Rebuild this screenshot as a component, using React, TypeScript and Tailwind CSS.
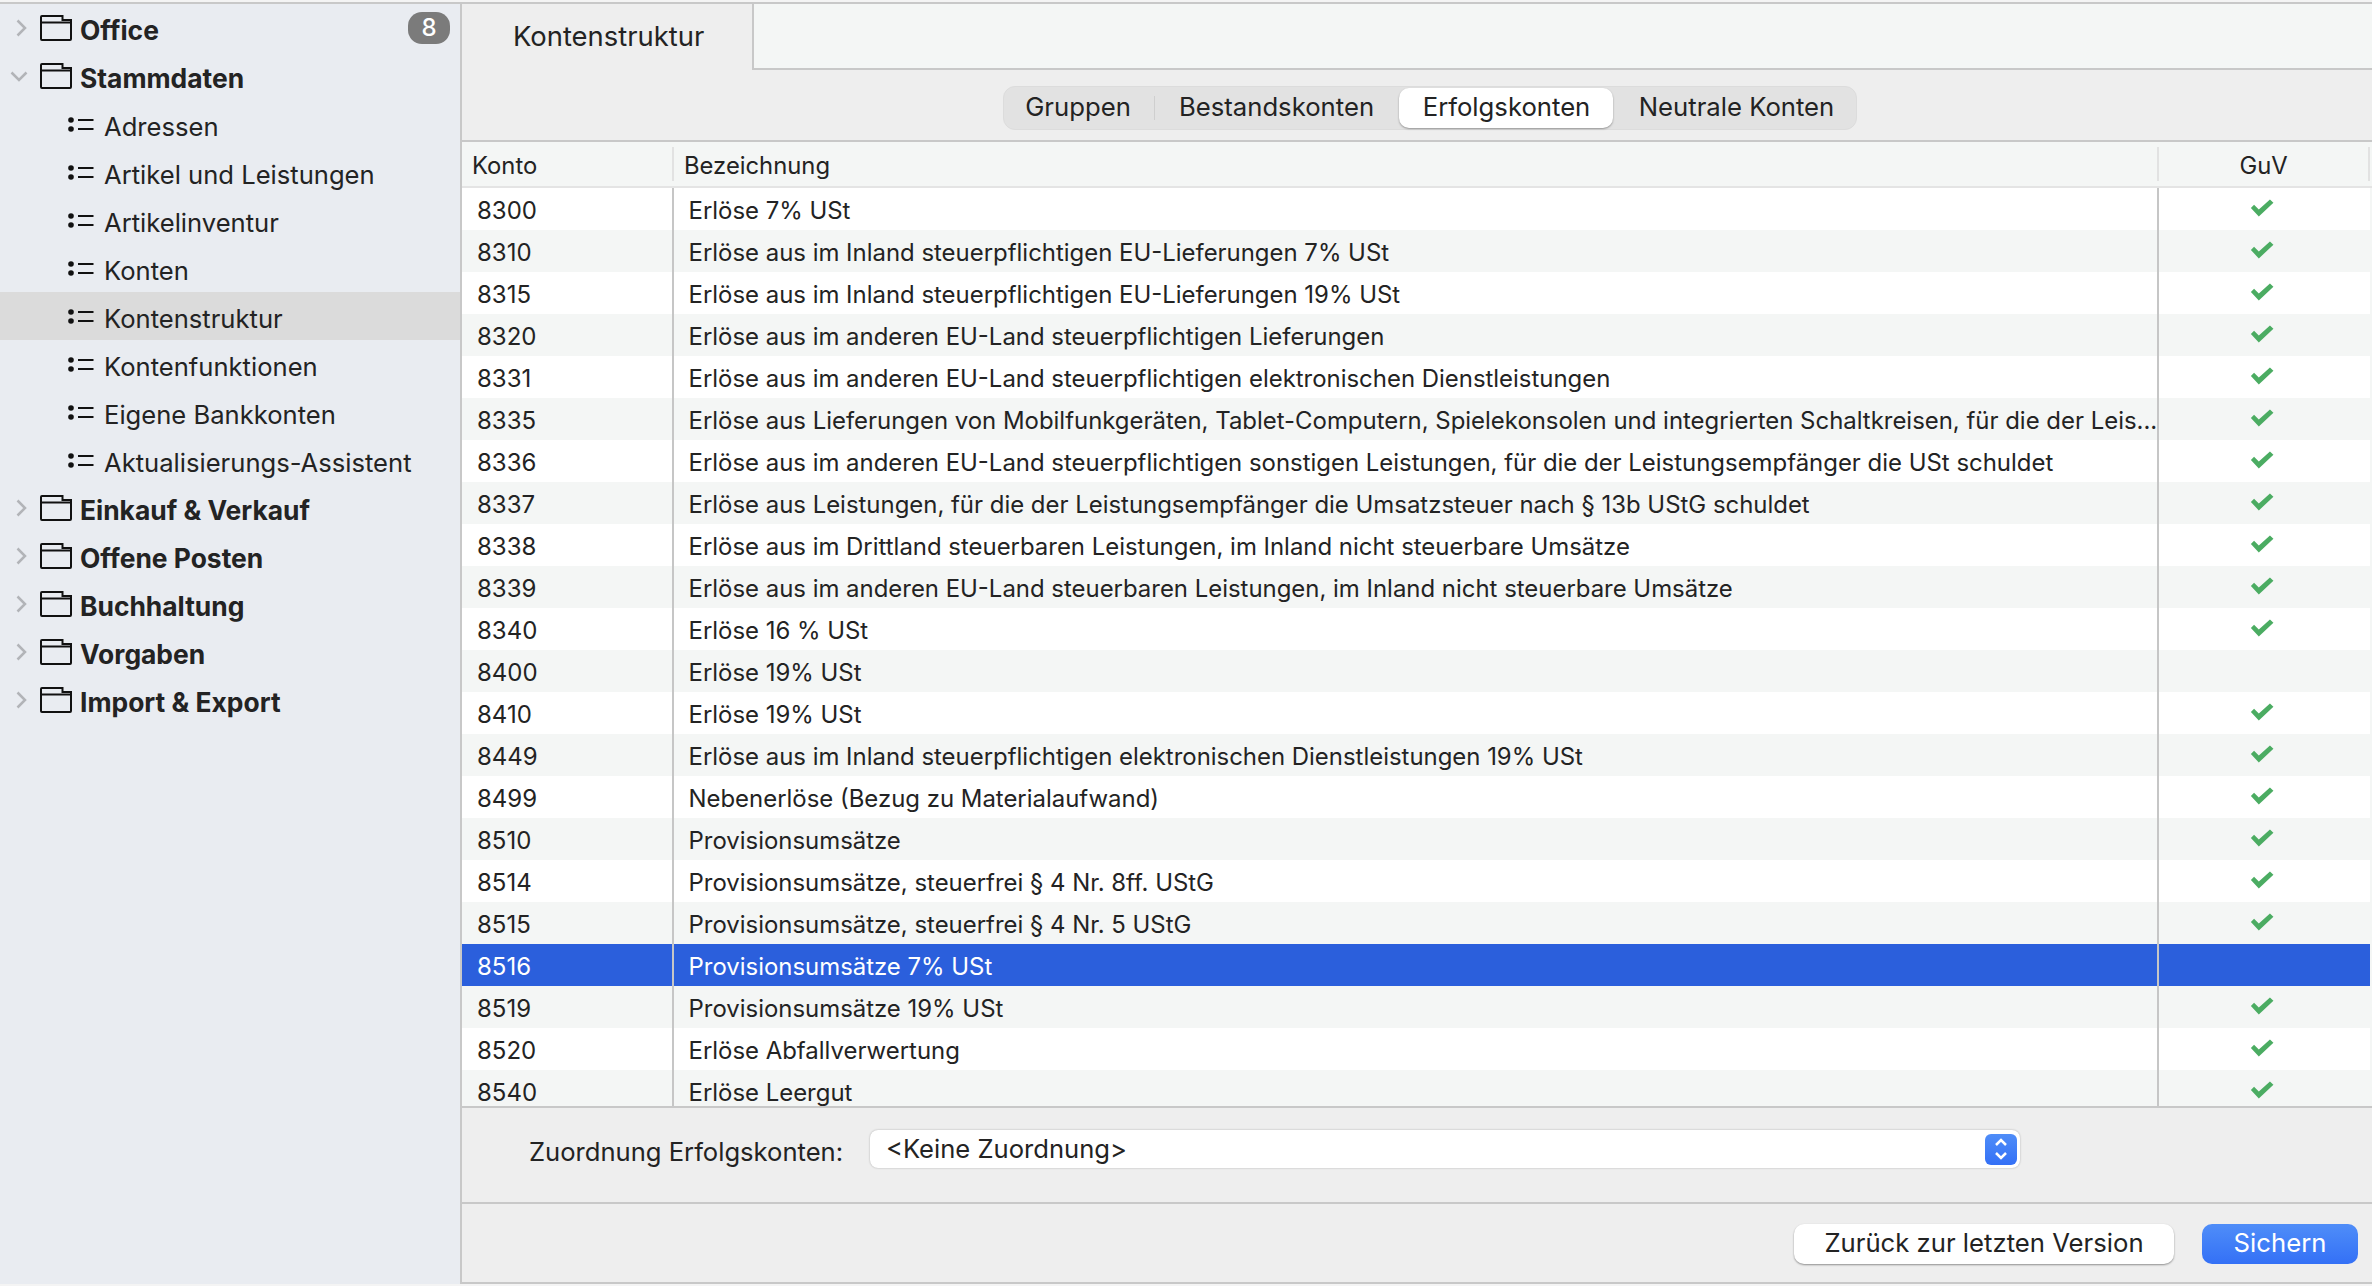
const font = "font-['Inter',sans-serif]";

type Row = [string, string, boolean];

const rows: Row[] = [
  ['8300', 'Erlöse 7% USt', true],
  ['8310', 'Erlöse aus im Inland steuerpflichtigen EU-Lieferungen 7% USt', true],
  ['8315', 'Erlöse aus im Inland steuerpflichtigen EU-Lieferungen 19% USt', true],
  ['8320', 'Erlöse aus im anderen EU-Land steuerpflichtigen Lieferungen', true],
  ['8331', 'Erlöse aus im anderen EU-Land steuerpflichtigen elektronischen Dienstleistungen', true],
  ['8335', 'Erlöse aus Lieferungen von Mobilfunkgeräten, Tablet-Computern, Spielekonsolen und integrierten Schaltkreisen, für die der Leis...', true],
  ['8336', 'Erlöse aus im anderen EU-Land steuerpflichtigen sonstigen Leistungen, für die der Leistungsempfänger die USt schuldet', true],
  ['8337', 'Erlöse aus Leistungen, für die der Leistungsempfänger die Umsatzsteuer nach § 13b UStG schuldet', true],
  ['8338', 'Erlöse aus im Drittland steuerbaren Leistungen, im Inland nicht steuerbare Umsätze', true],
  ['8339', 'Erlöse aus im anderen EU-Land steuerbaren Leistungen, im Inland nicht steuerbare Umsätze', true],
  ['8340', 'Erlöse 16 % USt', true],
  ['8400', 'Erlöse 19% USt', false],
  ['8410', 'Erlöse 19% USt', true],
  ['8449', 'Erlöse aus im Inland steuerpflichtigen elektronischen Dienstleistungen 19% USt', true],
  ['8499', 'Nebenerlöse (Bezug zu Materialaufwand)', true],
  ['8510', 'Provisionsumsätze', true],
  ['8514', 'Provisionsumsätze, steuerfrei § 4 Nr. 8ff. UStG', true],
  ['8515', 'Provisionsumsätze, steuerfrei § 4 Nr. 5 UStG', true],
  ['8516', 'Provisionsumsätze 7% USt', false],
  ['8519', 'Provisionsumsätze 19% USt', true],
  ['8520', 'Erlöse Abfallverwertung', true],
  ['8540', 'Erlöse Leergut', true],
];

function Folder() {
  return (
    <svg width="32" height="26" viewBox="0 0 32 26" fill="none" stroke="#111" strokeWidth="2" className="shrink-0">
      <path d="M1 24V2a1 1 0 0 1 1-1h20.500v4H31v19a1 1 0 0 1-1 1H2a1 1 0 0 1-1-1z" />
      <path d="M1 7.500h30" />
    </svg>
  );
}

function ListIcon() {
  return (
    <svg width="26" height="16" viewBox="0 0 26 16" className="shrink-0">
      <circle cx="3" cy="3" r="2.800" fill="#111" />
      <circle cx="3" cy="12" r="2.800" fill="#111" />
      <rect x="10" y="2" width="15.500" height="2" fill="#111" />
      <rect x="10" y="11" width="15.500" height="2" fill="#111" />
    </svg>
  );
}

function Check() {
  return (
    <svg width="24" height="18" viewBox="0 0 22 17" className="block">
      <path d="M0.500 8.500L3.500 5.500L8 10L18.500 0.500L21.800 3.500L8 16.500Z" fill="#4bac62" />
    </svg>
  );
}

function Group({ label, open, badge }: { label: string; open?: boolean; badge?: string }) {
  return (
    <div className="flex h-12 items-center">
      <div className="flex w-[40px] shrink-0 justify-center pl-[2px]">
        {open ? (
          <svg width="18" height="11" viewBox="0 0 18 11" fill="none" stroke="#b2b4b8" strokeWidth="2.500" className="-ml-[4px]">
            <path d="M1.500 1.500L9 9L16.500 1.500" />
          </svg>
        ) : (
          <svg width="11" height="18" viewBox="0 0 11 18" fill="none" stroke="#b2b4b8" strokeWidth="2.500">
            <path d="M1.500 1.500L9 9L1.500 16.500" />
          </svg>
        )}
      </div>
      <Folder />
      <span className="ml-[8px] flex-1 pt-[6px] text-[26.4px] font-bold text-[#232323]">{label}</span>
      {badge && (
        <span className="mr-[10px] flex h-[32px] w-[42px] items-center justify-center rounded-[14px] bg-[#7b7b7b] text-[24px] font-medium text-white">
          {badge}
        </span>
      )}
    </div>
  );
}

function Leaf({ label, active }: { label: string; active?: boolean }) {
  return (
    <div className={`flex h-12 items-center pl-[68px] ${active ? 'bg-[#dbdbdb]' : ''}`}>
      <div className="pt-[2px]">
        <ListIcon />
      </div>
      <span className="ml-[10px] pt-[7px] text-[25.6px] text-[#232323]">{label}</span>
    </div>
  );
}

function TableRow({ row, index }: { row: Row; index: number }) {
  const selected = row[0] === '8516';
  const bg = selected ? 'bg-[#2b5fdc]' : index % 2 === 0 ? 'bg-white' : 'bg-[#f4f6f5]';
  const text = selected ? 'text-white' : 'text-[#232323]';
  return (
    <div className={`flex h-[42px] shrink-0 ${bg} ${text}`}>
      <div className="flex w-[210px] shrink-0 items-center pt-[3px] pl-[15px] text-[24px]">{row[0]}</div>
      <div className="w-[2px] shrink-0 bg-[#c6c6c6]" />
      <div className="flex min-w-0 w-[1483px] shrink-0 items-center overflow-hidden pt-[3px] pl-[14.5px] text-[23.93px] whitespace-nowrap">
        {row[1]}
      </div>
      <div className="w-[2px] shrink-0 bg-[#c6c6c6]" />
      <div className="flex flex-1 items-center justify-center pr-[5px] pb-[2px]">{row[2] && <Check />}</div>
    </div>
  );
}

export default function App() {
  return (
    <div className={`flex h-[1286px] w-[2372px] flex-col overflow-hidden bg-white ${font}`}>
      <div className="h-[2px] shrink-0 bg-[#f4f4f4]" />
      <div className="h-[2px] shrink-0 bg-[#c8c8c8]" />
      <div className="flex min-h-0 flex-1">
        <aside className="w-[460px] shrink-0 bg-[#e9ecf1]">
          <Group label="Office" badge="8" />
          <Group label="Stammdaten" open />
          <Leaf label="Adressen" />
          <Leaf label="Artikel und Leistungen" />
          <Leaf label="Artikelinventur" />
          <Leaf label="Konten" />
          <Leaf label="Kontenstruktur" active />
          <Leaf label="Kontenfunktionen" />
          <Leaf label="Eigene Bankkonten" />
          <Leaf label="Aktualisierungs-Assistent" />
          <Group label="Einkauf & Verkauf" />
          <Group label="Offene Posten" />
          <Group label="Buchhaltung" />
          <Group label="Vorgaben" />
          <Group label="Import & Export" />
        </aside>
        <div className="w-[2px] shrink-0 bg-[#c8c8c8]" />
        <main className="flex min-w-0 flex-1 flex-col bg-[#eeeeee]">
          <div className="flex h-[66px] shrink-0">
            <div className="flex w-[290px] shrink-0 items-center pl-[51px] text-[27.4px] text-[#232323]">
              Kontenstruktur
            </div>
            <div className="flex-1 border-b-2 border-l-2 border-[#c8c8c8] bg-[#f4f6f5]" />
          </div>
          <div className="flex h-[72px] shrink-0 items-center justify-center border-b-2 border-[#c8c8c8] pt-[6px] pl-[26px]">
            <div className="flex h-[44px] w-[854px] items-center rounded-[12px] border border-[#dcdcdc] bg-[#e2e2e2] text-[25.7px] text-[#232323]">
              <span className="w-[150px] pr-[2px] pb-[2px] text-center">Gruppen</span>
              <span className="h-[24px] w-px bg-[#cfcfcf]" />
              <span className="w-[244px] pr-[1px] pb-[2px] text-center">Bestandskonten</span>
              <span className="flex h-[40px] w-[214px] items-center justify-center rounded-[10px] bg-white pb-[2px] pl-[1px] shadow-[0_1px_2px_rgba(0,0,0,0.35)]">
                Erfolgskonten
              </span>
              <span className="flex-1 pb-[2px] pl-[4px] text-center">Neutrale Konten</span>
            </div>
          </div>
          <div className="flex h-[46px] shrink-0 border-b-2 border-[#e4e4e4] bg-[#f4f6f5] text-[23.8px] text-[#232323]">
            <div className="flex w-[210px] shrink-0 items-center pt-[3px] pl-[10px]">Konto</div>
            <div className="my-[5px] w-[2px] shrink-0 bg-[#e2e2e2]" />
            <div className="flex w-[1483px] shrink-0 items-center pt-[3px] pl-[10px]">Bezeichnung</div>
            <div className="my-[5px] w-[2px] shrink-0 bg-[#e2e2e2]" />
            <div className="flex w-[209px] shrink-0 items-center justify-center pt-[3px]">GuV</div>
            <div className="my-[5px] w-[2px] shrink-0 bg-[#e2e2e2]" />
          </div>
          <div className="flex h-[920px] shrink-0 flex-col overflow-hidden border-b-2 border-[#c8c8c8] bg-[#f4f6f5] pr-[2px]">
            {rows.map((row, i) => (
              <TableRow key={row[0]} row={row} index={i} />
            ))}
          </div>
          <div className="flex h-[96px] shrink-0 items-start border-b-2 border-[#c8c8c8] pt-[22px] text-[25.6px] text-[#232323]">
            <span className="ml-[67px] w-[341px] pt-[3px]">Zuordnung Erfolgskonten:</span>
            <div className="flex h-[38px] w-[1150px] items-center justify-between rounded-[8px] bg-white pr-[3px] pl-[16px] shadow-[0_0_2px_rgba(0,0,0,0.3)]">
              <span>&lt;Keine Zuordnung&gt;</span>
              <span className="flex h-[31px] w-[32px] items-center justify-center rounded-[6px] bg-gradient-to-b from-[#4f8df8] to-[#3470f6]">
                <svg width="14" height="24" viewBox="0 0 14 24" fill="none" stroke="white" strokeWidth="2.500">
                  <path d="M2 8L7 3L12 8" />
                  <path d="M2 16L7 21L12 16" />
                </svg>
              </span>
            </div>
          </div>
          <div className="flex h-[80px] shrink-0 items-start justify-end border-b-2 border-[#c8c8c8] pt-[20px] pr-[14px] text-[25.7px]">
            <button className="flex h-[40px] w-[380px] items-center justify-center rounded-[10px] bg-white pb-[1px] text-[#232323] shadow-[0_1px_2px_rgba(0,0,0,0.4)]">
              Zurück zur letzten Version
            </button>
            <button className="ml-[28px] flex h-[40px] w-[156px] items-center justify-center rounded-[10px] bg-gradient-to-b from-[#4f8df8] to-[#3470f6] pb-[1px] text-white">
              Sichern
            </button>
          </div>
        </main>
      </div>
      <div className="h-[2px] shrink-0 bg-[#f4f4f4]" />
    </div>
  );
}
